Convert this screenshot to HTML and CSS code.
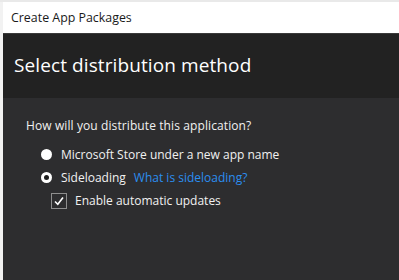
FILE: index.html
```html
<!DOCTYPE html>
<html lang="en">
<head>
  <meta charset="UTF-8">
  <title>Create App Packages</title>
  <link rel="stylesheet" href="styles.css">
</head>
<body>
  <div class="desktop">
    <div class="edge"></div>
    <div class="window">
      <div class="titlebar">Create App Packages</div>
      <div class="header">
        <h1>Select distribution method</h1>
      </div>
      <div class="content">
        <p class="question">How will you distribute this application?</p>
        <label class="option">
          <span class="radio"></span>
          <span>Microsoft Store under a new app name</span>
        </label>
        <label class="option">
          <span class="radio checked"></span>
          <span>Sideloading</span>
          <a href="#" class="link">What is sideloading?</a>
        </label>
        <label class="option sub">
          <span class="checkbox">
            <svg width="12" height="12" viewBox="0 0 12 12"><path d="M2 6.5 L4.8 9.3 L10 2.5" fill="none" stroke="#fff" stroke-width="1.6"/></svg>
          </span>
          <span>Enable automatic updates</span>
        </label>
      </div>
    </div>
  </div>
</body>
</html>
```

FILE: styles.css
```css
* {
  margin: 0;
  padding: 0;
  box-sizing: border-box;
}

body {
  font-family: 'Open Sans', 'Noto Sans', sans-serif;
  background: #e9e9e9;
  width: 399px;
  height: 280px;
  overflow: hidden;
}

.desktop {
  display: flex;
  height: 280px;
  padding-top: 2px;
}

.edge {
  width: 3px;
  background: #f2f2f2;
}

.window {
  flex: 1;
  display: flex;
  flex-direction: column;
}

.titlebar {
  height: 32px;
  background: #ffffff;
  color: #1a1a1a;
  font-size: 12.4px;
  padding: 7px 0 0 8px;
  border-bottom: 1px solid #3a3a3a;
}

.header {
  height: 64px;
  background: #222222;
  padding: 18px 0 0 11px;
}

.header h1 {
  font-size: 19px;
  font-weight: 400;
  color: #ffffff;
  letter-spacing: 0.1px;
}

.content {
  flex: 1;
  background: #2d2d2f;
  color: #f1f1f1;
  font-size: 12px;
  padding: 19px 0 0 23px;
}

.question {
  margin-bottom: 9px;
  letter-spacing: 0.1px;
}

.option {
  display: flex;
  align-items: center;
  height: 23px;
  padding-left: 15px;
}

.radio {
  width: 11px;
  height: 11px;
  border-radius: 50%;
  background: #ffffff;
  margin-right: 9px;
  position: relative;
}

.radio.checked::after {
  content: "";
  position: absolute;
  left: 3px;
  top: 3px;
  width: 5px;
  height: 5px;
  border-radius: 50%;
  background: #1e1e1e;
}

.link {
  color: #2b8ef0;
  text-decoration: none;
  margin-left: 8px;
}

.option.sub {
  padding-left: 25px;
}

.checkbox {
  width: 16px;
  height: 16px;
  border: 1px solid #8e8e8e;
  display: flex;
  align-items: center;
  justify-content: center;
  margin-right: 8px;
}
```
